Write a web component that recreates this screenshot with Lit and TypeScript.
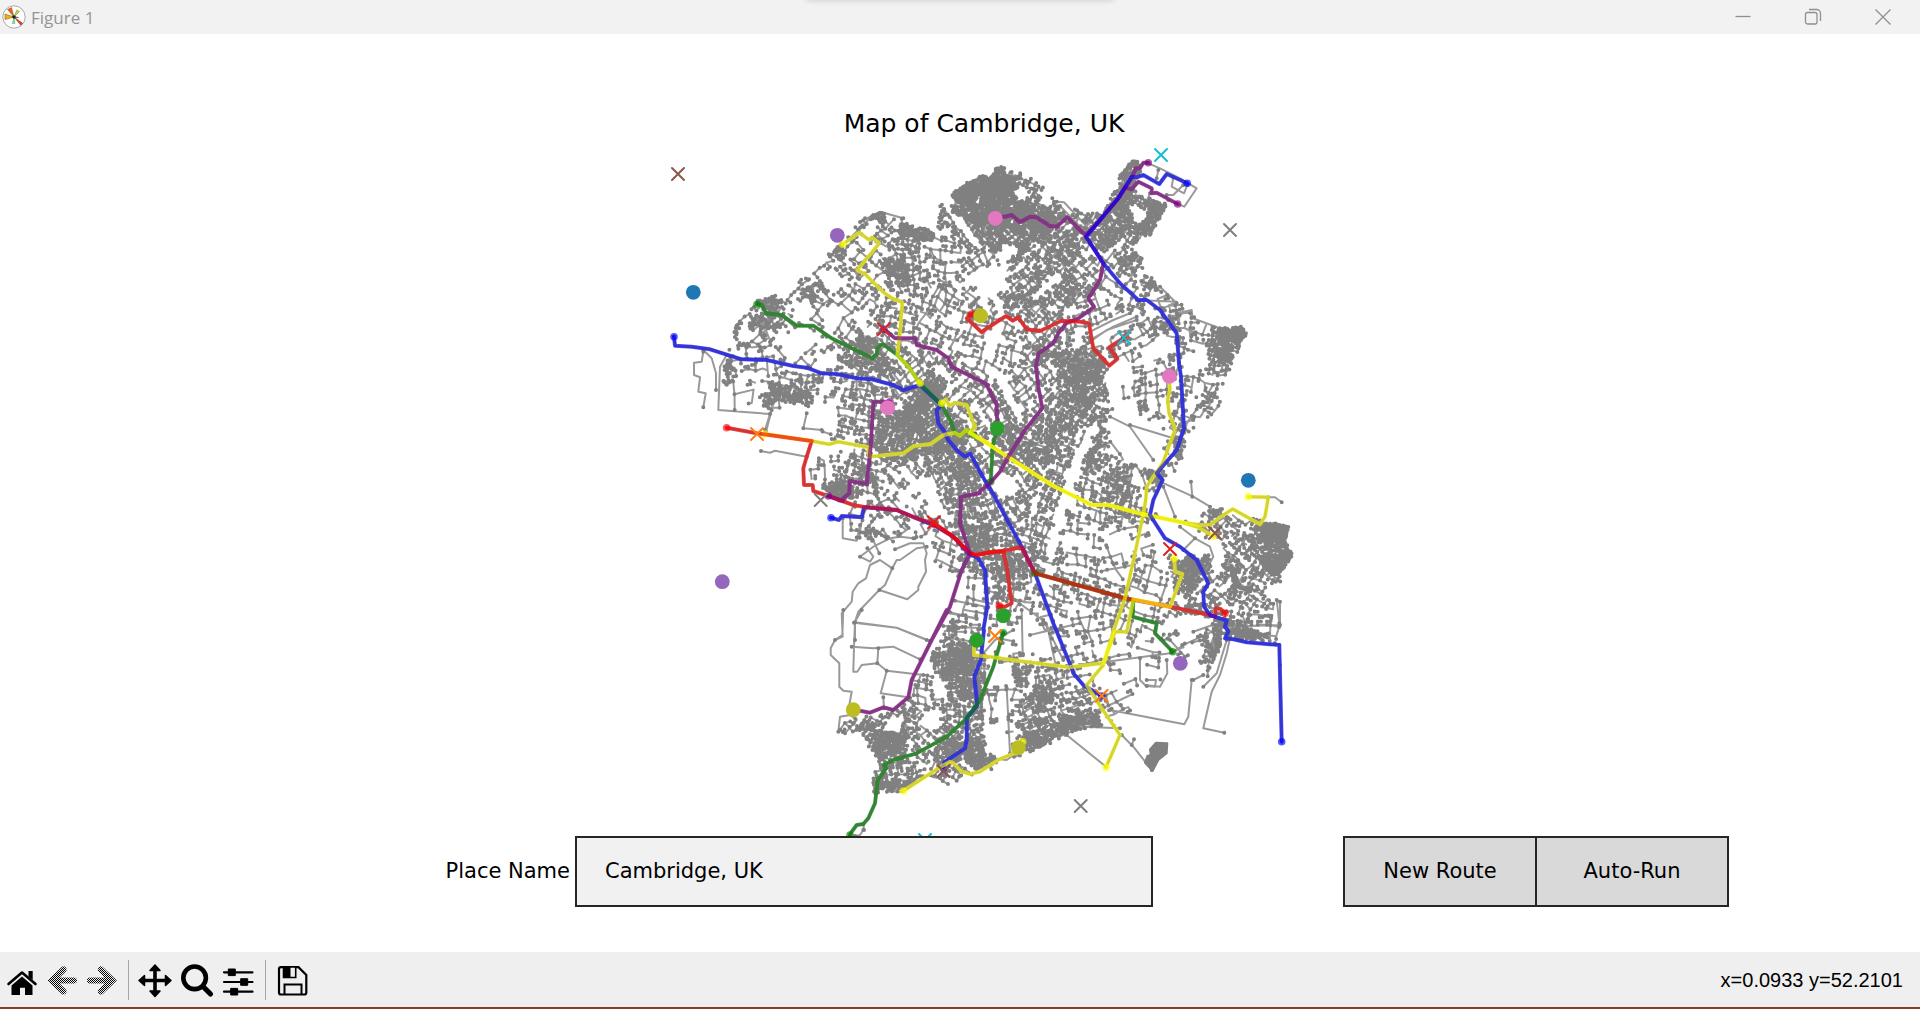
import { LitElement, html, svg, css } from "lit";
import { customElement, state } from "lit/decorators.js";

type Point = [number, number];

/* ---------- survey data ---------- */

// Map sheets. Coordinates inside a sheet are in thirds of a map unit.
const SHEETS: Record<string, Point> = {
  A: [660, 100],
  B: [980, 100],
  C: [660, 410],
  D: [980, 410],
  E: [780, 610],
  F: [1030, 610],
};

function trace(text: string): Point[] {
  let origin: Point = [0, 0];
  const points: Point[] = [];
  for (const token of text.trim().split(/\s+/)) {
    if (SHEETS[token]) {
      origin = SHEETS[token];
    } else {
      const [x, y] = token.split(",").map(Number);
      points.push([origin[0] + x / 3, origin[1] + y / 3]);
    }
  }
  return points;
}

const r1 = (n: number) => Math.round(n * 10) / 10;
const toPath = (points: Point[]) => "M" + points.map(([x, y]) => `${r1(x)} ${r1(y)}`).join("L");

const CITY = trace(`A 220,680 250,645 285,605 330,590 370,570 395,575 420,530 480,480 530,440 600,366 660,335
  730,355 735,370 810,390 830,400 830,345 840,310 890,270 940,235 990,222
  B 60,195 85,212 130,220 180,250 230,310 258,340 285,315 330,335 370,340 390,290 420,250 410,235 455,180 490,190
  480,225 455,262 490,290 565,310 530,370 510,405 475,430 455,440 490,475 510,525 535,560 590,605 635,630 640,660
  710,685 785,680 800,700 775,750 750,800 740,860 715,925 650,985
  D 650,35 620,95 615,130 580,190 540,225 500,300 620,330 690,300 720,285 745,310 800,320 850,330 925,350 915,395
  940,435 920,460 905,500 860,540 880,580 900,650 895,700 735,680 690,780
  F 540,200 490,210 510,150 420,150 400,215 360,225 300,290 335,310 280,320 250,350 190,350 110,375 60,400 0,420
  E 780,420 710,440 660,460 560,500 515,535 470,510 440,490 370,548 280,548 270,510 300,460 285,435 240,380 175,365
  180,320 250,320 360,300 385,260 390,205 450,180 450,130 490,100 495,50
  C 890,600 910,520 800,455 820,400 740,390 660,400 548,388 548,280 480,235 445,210 445,150 520,130 510,80 430,55
  440,10 330,10 168,0 A 175,850 200,780 215,720`);

// Commons, playing fields, the river and the railway corridor.
const OPEN_GROUND = [
  "A 870,345 895,350 972,440 950,448",
  "A 955,285 965,285 960,312 940,310",
  "A 850,300 880,290 890,315 860,325",
  "A 470,510 500,500 530,545 520,560",
  "A 480,640 520,600 560,640 500,680",
  "A 350,700 420,700 470,695 480,720 420,755 350,740",
  "A 480,760 530,755 540,790 500,815 470,800",
  "A 230,690 260,670 280,720 240,735",
  "A 400,620 440,600 460,650 400,660",
  "A 655,345 645,400 610,430 590,420 620,390",
  "A 930,520 985,550 985,620 950,590",
  "A 860,620 890,635 910,690 875,680",
  "A 580,640 620,620 640,660 600,690",
  "A 330,930 430,910 440,985 330,985",
  "A 450,930 520,910 520,975 440,980",
  "A 810,780 860,805 865,840 830,825",
  "B 0,520 50,495 85,555 40,590 0,590",
  "B 60,430 115,440 110,465 70,480",
  "B 150,590 230,515 250,535 170,600",
  "B 95,275 130,255 150,285 120,305",
  "B 180,290 200,265 220,305 205,325",
  "B 435,330 470,310 500,345 480,370",
  "B 330,680 460,635 475,665 350,730",
  "B 380,830 435,780 460,800 420,870 385,880",
  "B 10,700 60,690 50,750 20,770",
  "B 480,760 550,710 580,715 550,780",
  "B 620,765 670,750 685,795 630,820",
  "B 410,910 470,890 490,980 410,980",
  "B 620,890 650,870 640,940 620,945",
  "D 395,20 540,80 560,140 530,190 450,130 400,60",
  "D 340,30 352,40 285,220 235,390 200,530 190,530 215,350 260,190",
  "D 10,195 60,185 105,205 120,235 60,270 30,230",
  "D 520,335 650,355 655,410 610,440 525,430",
  "D 395,375 465,390 445,430 405,420",
  "D 260,375 320,375 320,415 262,410",
  "D 110,590 180,640 220,740 140,730 115,650",
  "D 610,610 680,625 700,645 640,680 560,650",
  "D 525,435 555,435 555,465 525,465",
  "D 695,410 735,425 715,490 690,465",
  "C 710,260 780,195 790,230 750,280",
  "C 785,180 840,260 825,310 805,290",
  "C 460,90 580,90 580,110 500,140",
  "C 640,335 685,315 695,340 640,365",
  "E 315,325 370,325 365,365 320,368",
  "E 430,300 485,295 480,345 450,365 425,345",
  "E 605,355 680,365 680,420 625,425",
  "E 610,180 690,165 710,230 640,225",
  "E 460,220 500,215 500,255 460,255",
  "E 650,255 685,255 685,315 640,315",
  "F 190,175 235,175 235,235 195,235",
  "F 335,195 375,195 355,290 320,270",
  "F 260,155 325,145 325,195 280,215",
  "F 10,105 65,115 55,145 15,145",
].map(trace);

// Neighbourhoods: centre, street bearing, block width and depth, share of streets kept.
const DISTRICTS: number[][] = [
  [755, 320, -40, 8, 9, 0.75],
  [755, 370, -8, 8, 14, 0.7],
  [735, 395, 82, 14, 22, 0.6],
  [790, 395, 5, 6, 9, 0.8],
  [800, 340, -52, 8, 15, 0.6],
  [815, 300, -52, 6, 12, 0.75],
  [835, 270, -40, 7, 12, 0.65],
  [880, 222, -48, 6, 9, 0.75],
  [870, 270, -50, 7, 12, 0.7],
  [918, 232, 8, 5, 6, 0.9],
  [905, 270, 80, 6, 9, 0.8],
  [940, 250, 6, 8, 12, 0.75],
  [860, 320, 38, 7, 13, 0.65],
  [900, 320, 10, 6, 11, 0.75],
  [935, 320, 25, 7, 12, 0.7],
  [955, 215, 48, 6, 7, 0.85],
  [975, 190, -35, 4, 5, 0.95],
  [1000, 200, -40, 4, 5, 0.95],
  [975, 225, 46, 5, 6, 0.9],
  [1015, 235, -45, 5, 6, 0.85],
  [1035, 200, 30, 5, 7, 0.8],
  [1035, 220, -40, 4, 5, 0.9],
  [1060, 240, -48, 6, 9, 0.8],
  [985, 275, -42, 7, 12, 0.65],
  [1020, 280, -42, 5, 9, 0.8],
  [1060, 285, 44, 5, 9, 0.85],
  [1105, 235, -55, 5, 8, 0.85],
  [1125, 200, -56, 4, 5, 0.9],
  [1150, 215, -62, 4, 5, 0.85],
  [1110, 265, 40, 6, 12, 0.75],
  [1140, 285, -65, 6, 14, 0.65],
  [1175, 305, -15, 8, 12, 0.6],
  [1085, 325, -20, 8, 14, 0.65],
  [1040, 330, 45, 6, 10, 0.8],
  [1000, 345, 20, 8, 13, 0.65],
  [1035, 385, 50, 7, 12, 0.7],
  [1080, 375, -48, 4, 7, 0.9],
  [1070, 410, -60, 5, 8, 0.85],
  [1130, 340, -30, 7, 12, 0.7],
  [1145, 385, 80, 8, 13, 0.65],
  [1190, 340, 8, 7, 11, 0.75],
  [1230, 340, 15, 4, 5, 0.9],
  [1200, 380, 10, 7, 11, 0.75],
  [1205, 410, -60, 6, 9, 0.8],
  [1125, 430, 60, 16, 20, 0.6],
  [880, 350, 35, 6, 9, 0.8],
  [905, 375, 50, 6, 10, 0.7],
  [870, 400, 8, 6, 9, 0.8],
  [930, 395, -45, 4, 6, 0.85],
  [850, 425, 6, 7, 9, 0.75],
  [820, 420, 5, 12, 14, 0.6],
  [900, 440, -80, 4, 6, 0.85],
  [940, 430, -40, 4, 5, 0.9],
  [960, 400, -50, 7, 11, 0.7],
  [990, 420, 50, 6, 9, 0.8],
  [1040, 440, -62, 5, 9, 0.8],
  [1085, 450, -68, 5, 10, 0.8],
  [825, 470, 0, 9, 12, 0.6],
  [840, 490, 5, 5, 6, 0.85],
  [865, 475, 15, 7, 9, 0.75],
  [905, 480, 40, 8, 12, 0.6],
  [945, 470, 50, 5, 8, 0.75],
  [885, 520, 45, 8, 10, 0.7],
  [850, 515, 2, 16, 16, 0.6],
  [930, 520, 55, 10, 12, 0.6],
  [965, 500, -12, 5, 7, 0.85],
  [975, 545, 5, 5, 7, 0.85],
  [940, 550, 20, 9, 12, 0.65],
  [1000, 500, 62, 6, 8, 0.75],
  [1025, 480, 45, 5, 9, 0.8],
  [1055, 490, -65, 5, 9, 0.8],
  [1010, 565, 0, 5, 7, 0.8],
  [1040, 550, 20, 6, 9, 0.75],
  [1090, 500, 10, 7, 11, 0.75],
  [1120, 490, -78, 5, 8, 0.8],
  [1085, 545, 5, 9, 13, 0.75],
  [1120, 555, -20, 9, 14, 0.7],
  [1155, 480, 60, 9, 13, 0.6],
  [1060, 590, 12, 7, 11, 0.75],
  [1100, 600, 12, 7, 12, 0.75],
  [1150, 580, 14, 9, 16, 0.65],
  [1190, 570, 35, 4, 5, 0.9],
  [1215, 590, -45, 6, 10, 0.75],
  [1225, 520, 35, 6, 10, 0.75],
  [1250, 550, 40, 6, 10, 0.7],
  [1275, 535, 18, 4, 4, 0.98],
  [1280, 560, 30, 4, 5, 0.9],
  [1250, 595, -60, 6, 10, 0.75],
  [1265, 625, 3, 7, 10, 0.75],
  [1245, 640, 8, 4, 5, 0.9],
  [1210, 615, 10, 6, 9, 0.75],
  [1215, 650, -70, 5, 8, 0.75],
  [1180, 620, 30, 8, 13, 0.65],
  [1190, 655, -30, 9, 12, 0.6],
  [1140, 625, 15, 9, 14, 0.65],
  [1090, 630, -10, 9, 15, 0.7],
  [1050, 640, -20, 9, 15, 0.65],
  [1010, 610, 5, 8, 13, 0.6],
  [975, 600, 5, 10, 13, 0.55],
  [965, 640, 0, 8, 10, 0.65],
  [960, 665, 2, 4, 5, 0.9],
  [1000, 640, 10, 18, 24, 0.5],
  [1020, 670, -5, 6, 10, 0.65],
  [1045, 675, -20, 6, 9, 0.7],
  [1080, 665, -15, 8, 13, 0.7],
  [1120, 670, -15, 12, 16, 0.7],
  [1150, 665, 5, 14, 17, 0.65],
  [1110, 705, -30, 9, 12, 0.65],
  [1070, 700, -20, 6, 9, 0.7],
  [1080, 725, -20, 4, 5, 0.9],
  [1035, 735, -20, 4, 5, 0.9],
  [1040, 705, -25, 5, 8, 0.8],
  [1005, 700, -2, 9, 12, 0.65],
  [965, 700, 2, 5, 7, 0.75],
  [925, 690, 5, 7, 9, 0.7],
  [905, 715, 35, 6, 8, 0.75],
  [865, 720, 30, 6, 8, 0.75],
  [850, 720, -50, 9, 12, 0.6],
  [890, 740, 20, 4, 5, 0.9],
  [925, 740, 35, 6, 10, 0.7],
  [945, 745, 40, 5, 7, 0.8],
  [975, 755, 60, 4, 6, 0.8],
  [960, 775, 30, 6, 9, 0.75],
  [900, 780, -8, 5, 7, 0.75],
  [1010, 745, -20, 10, 16, 0.6],
  [1190, 545, 30, 16, 22, 0.6],
];

// Closely built courts: centre, half width and depth, number of junctions.
const COURTS: number[][] = [
  [880, 214, 8, 5, 30], [909, 230, 9, 6, 60], [927, 233, 8, 6, 50], [770, 303, 10, 7, 50], [765, 322, 14, 8, 50],
  [735, 327, 5, 6, 24], [812, 290, 9, 8, 30], [838, 252, 8, 6, 26], [897, 272, 12, 11, 90], [865, 345, 11, 9, 70],
  [880, 366, 12, 8, 40], [788, 393, 22, 9, 100], [728, 370, 5, 14, 40], [850, 362, 14, 6, 36], [925, 395, 14, 10, 70],
  [905, 420, 18, 10, 60], [940, 445, 14, 14, 90], [960, 470, 14, 12, 60], [900, 455, 16, 8, 50], [975, 190, 16, 13, 200],
  [1000, 188, 16, 14, 200], [985, 215, 18, 16, 190], [1012, 212, 16, 14, 140], [960, 202, 12, 12, 80],
  [1035, 228, 14, 12, 80], [1010, 250, 20, 10, 60], [1058, 245, 18, 12, 80], [1050, 215, 14, 12, 70],
  [1108, 228, 18, 14, 90], [1130, 185, 7, 14, 60], [1120, 206, 8, 9, 40], [1156, 212, 9, 9, 60], [1148, 228, 9, 9, 50],
  [1133, 162, 4, 4, 20], [1055, 285, 20, 14, 80], [1025, 300, 18, 8, 50], [1130, 262, 9, 10, 40], [1154, 285, 5, 8, 26],
  [1232, 334, 13, 8, 110], [1222, 350, 8, 8, 40], [1082, 372, 16, 12, 100], [1078, 400, 12, 12, 70], [1050, 350, 16, 10, 50],
  [1140, 410, 8, 6, 20], [1060, 430, 16, 14, 70], [1085, 460, 12, 14, 60], [1040, 455, 14, 8, 50], [1010, 440, 16, 14, 80],
  [1154, 474, 6, 8, 50], [838, 491, 13, 7, 80], [862, 470, 14, 10, 30], [1064, 505, 6, 14, 50], [1120, 485, 12, 10, 40],
  [980, 540, 12, 12, 60], [1008, 560, 14, 14, 60], [1000, 590, 10, 12, 30], [1190, 568, 10, 10, 100], [1276, 533, 14, 9, 220],
  [1272, 562, 11, 9, 70], [1288, 555, 5, 6, 30], [1220, 508, 6, 6, 30], [1246, 545, 10, 10, 30], [1250, 637, 16, 5, 60],
  [1195, 612, 14, 8, 30], [1222, 628, 7, 7, 30], [1215, 655, 7, 16, 50], [960, 660, 12, 15, 130], [970, 690, 10, 10, 50],
  [890, 742, 12, 12, 110], [865, 725, 12, 6, 30], [905, 728, 10, 8, 30], [950, 748, 12, 10, 60], [975, 755, 10, 10, 60],
  [1080, 722, 18, 7, 90], [1034, 743, 14, 6, 80], [1045, 695, 12, 10, 60], [1020, 675, 8, 8, 30],
  [888, 785, 14, 6, 40], [1165, 325, 14, 8, 26], [870, 530, 9, 9, 26], [1180, 450, 5, 12, 30],
  [950, 628, 9, 10, 30], [1100, 430, 8, 20, 40], [1030, 560, 9, 14, 30], [1240, 585, 12, 10, 30], [1232, 568, 10, 8, 30],
];

// Single lanes outside the built-up area.
const LANES = [
  "A 42,710 45,737 95,740 150,748 200,765",
  "A 130,755 125,785 102,788 102,825 120,832 115,875 137,880 130,922",
  "A 130,750 155,775 168,820 168,870",
  "A 200,765 180,800 175,930 330,942 350,870",
  "A 600,366 660,335 730,355", "A 640,345 600,385 570,415",
  "A 330,942 315,990",
  "C 318,65 335,0", "C 303,123 330,128 345,122 440,140", "C 430,55 485,60", "C 440,10 430,55",
  "C 600,440 640,410 690,385 720,380 760,385", "C 600,440 630,455 640,440 622,415",
  "C 705,418 750,400 790,400 800,430 795,450 798,485 775,530 775,540 742,568 658,540",
  "C 800,410 770,415 720,450 710,450 697,475 675,525 658,540 595,605 585,635 585,690",
  "C 697,475 660,450 630,465 618,505 595,520 578,545 575,575 545,610 548,680 525,690",
  "C 585,637 710,653 800,690", "C 630,370 658,430", "C 548,325 548,385 590,392 600,345",
  "C 885,572 985,592", "C 870,607 950,627", "C 850,648 970,655",
  "E 190,0 187,75 165,90 152,115 152,135 178,160 178,230 190,242 215,245 207,290",
  "E 245,0 225,35 222,110 220,185 232,185 245,165 292,160 295,115",
  "E 222,38 350,53 450,93", "E 215,110 280,115 340,110 420,148", "E 292,160 320,182 430,195",
  "E 320,182 302,250 385,262", "E 310,262 312,295", "E 500,8 590,25", "E 175,365 180,320 210,315 230,330 195,370",
  "E 725,0 728,135", "E 610,130 645,90 700,60", "E 680,235 690,430", "E 600,440 680,450 720,420",
  "E 250,660 240,675 225,678", "E 250,642 252,660",
  "B 500,188 540,205 600,235 650,265 613,320 565,300", "B 560,285 580,285 610,255", "B 580,232 575,260 612,280 622,255",
  "B 535,210 530,235", "B 470,300 495,315 510,280", "B 485,290 480,310",
  "B 230,305 252,307 330,390", "B 240,318 318,398", "B 10,340 10,330",
  "B 470,600 590,605 550,625", "B 540,560 590,610", "B 590,640 635,630 638,655 720,685",
  "B 310,740 380,690 470,660", "B 330,720 400,680 470,650", "B 320,700 400,660 450,640",
  "D 390,20 450,50 520,150", "D 450,45 580,85", "D 540,215 640,260 690,290 700,320", "D 633,215 637,260",
  "D 550,230 585,320", "D 865,262 885,262 905,277", "D 690,290 685,345 740,320",
  "D 600,350 645,385 690,410 700,440 688,463", "D 645,385 610,420",
  "D 640,30 600,40 580,80", "D 890,570 898,640", "D 735,650 900,645", "D 640,665 740,630", "D 105,570 200,640 230,780",
  "D 900,575 900,645",
  "F 0,75 150,40", "F 40,30 100,150", "F 230,155 420,130 470,100 580,50",
  "F 420,90 465,140", "F 485,210 475,320 463,343 240,300", "F 490,210 520,195", "F 605,60 590,130 570,195 545,245 520,355 583,368",
  "F 590,90 560,190 520,230", "F 110,375 228,470", "F 275,375 310,410 365,480", "F 305,405 312,388",
  "F 410,150 412,190 390,230 345,225 330,210 330,145", "F 350,210 378,210 375,230 350,228", "F 748,105 750,165",
  "F 70,345 160,350 270,355",
].map(trace);

// The business park at the southern edge is built up as one solid block.
const PARK = trace("F 378,398 412,400 410,430 385,450 368,482 345,458 352,438 362,435 360,418");

/* ---------- street network ---------- */

function randomSource(seed: number) {
  return () => {
    seed = (seed + 0x6d2b79f5) | 0;
    let t = Math.imul(seed ^ (seed >>> 15), 1 | seed);
    t = (t + Math.imul(t ^ (t >>> 7), 61 | t)) ^ t;
    return ((t ^ (t >>> 14)) >>> 0) / 4294967296;
  };
}

function inside(x: number, y: number, polygon: Point[]) {
  let hit = false;
  for (let i = 0, j = polygon.length - 1; i < polygon.length; j = i++) {
    const [xi, yi] = polygon[i];
    const [xj, yj] = polygon[j];
    if (yi > y !== yj > y && x < ((xj - xi) * (y - yi)) / (yj - yi) + xi) hit = !hit;
  }
  return hit;
}

function nearestDistrict(x: number, y: number) {
  let best = 0;
  let bestDistance = Infinity;
  DISTRICTS.forEach(([dx, dy], i) => {
    const d = (dx - x) ** 2 + (dy - y) ** 2;
    if (d < bestDistance) {
      bestDistance = d;
      best = i;
    }
  });
  return best;
}

function buildNetwork() {
  const rnd = randomSource(52);
  const streets: string[] = [];
  const junctions: string[] = [];
  const street = (a: Point, b: Point) =>
    streets.push(`M${r1(a[0])} ${r1(a[1])}L${r1(b[0])} ${r1(b[1])}`);
  const junction = (p: Point) => junctions.push(`M${r1(p[0])} ${r1(p[1])}h0`);
  const buildable = (x: number, y: number) =>
    inside(x, y, CITY) && !OPEN_GROUND.some((ground) => inside(x, y, ground));

  DISTRICTS.forEach(([cx, cy, bearing, width, depth, keep], index) => {
    const cos = Math.cos((bearing * Math.PI) / 180);
    const sin = Math.sin((bearing * Math.PI) / 180);
    const w = width * 0.88;
    const d = depth * 0.84;
    const reach = 60;
    const nodes = new Map<string, Point>();
    const cols = Math.ceil(reach / w);
    const rows = Math.ceil(reach / d);
    for (let i = -cols; i <= cols; i++) {
      for (let j = -rows; j <= rows; j++) {
        const u = i * w + (rnd() - 0.5) * w * 0.7;
        const v = j * d + (rnd() - 0.5) * d * 0.25 + Math.sin(i * 0.7) * 1.5;
        const x = cx + u * cos - v * sin;
        const y = cy + u * sin + v * cos;
        if (nearestDistrict(x, y) === index && buildable(x, y)) nodes.set(`${i},${j}`, [x, y]);
      }
    }
    nodes.forEach((p, key) => {
      const [i, j] = key.split(",").map(Number);
      const along = nodes.get(`${i + 1},${j}`);
      const across = nodes.get(`${i},${j + 1}`);
      if (along && rnd() < keep + 0.12) street(p, along);
      if (across && rnd() < keep * 0.5) street(p, across);
      if (rnd() < 0.85) junction(p);
      if (rnd() < 0.7) {
        const side = rnd() < 0.5 ? -1 : 1;
        const length = 2 + rnd() * Math.min(5, d * 0.45);
        const end: Point = [p[0] - sin * length * side, p[1] + cos * length * side];
        if (buildable(end[0], end[1])) {
          street(p, end);
          junction(end);
          if (rnd() < 0.5) {
            const turn = rnd() < 0.5 ? -3 : 3;
            const spur: Point = [end[0] + cos * turn, end[1] + sin * turn];
            street(end, spur);
            junction(spur);
          }
        }
      }
    });
  });

  for (const [cx, cy, rx, ry, count] of COURTS) {
    const bearing = (DISTRICTS[nearestDistrict(cx, cy)][2] * Math.PI) / 180;
    const turn = rx === ry || Math.abs(rx - ry) < 5 ? bearing : 0;
    let last: Point | null = null;
    for (let n = 0; n < count; n++) {
      const u = (rnd() + rnd() * 0.3 - 0.65) * 2 * rx;
      const v = (rnd() + rnd() * 0.3 - 0.65) * 2 * ry;
      const p: Point = [cx + u * Math.cos(turn) - v * Math.sin(turn), cy + u * Math.sin(turn) + v * Math.cos(turn)];
      if (!buildable(p[0], p[1])) continue;
      junction(p);
      if (last && Math.hypot(p[0] - last[0], p[1] - last[1]) < 9) street(p, last);
      last = p;
    }
  }

  for (const lane of LANES) {
    streets.push(toPath(lane));
    junction(lane[0]);
    junction(lane[lane.length - 1]);
  }

  return { streets: streets.join(""), junctions: junctions.join("") };
}

/* ---------- routes and markers ---------- */

const BLUE = "#0000ff";
const GREEN = "#008000";
const YELLOW = "#ffff00";
const RED = "#ff0000";
const PURPLE = "#800080";

const ROUTES: { color: string; line: Point[] }[] = [
  [BLUE, "A 42,710 45,737 95,740 150,748 245,778 320,780 400,798 440,803 485,820 530,822 590,835 635,838 700,855 730,870 780,855 845,915 830,930 835,970 C 835,40 850,60 865,90 895,125 915,140 930,130 985,230 D 25,225 125,410 165,490 220,640 275,775 F 130,190 160,225 215,258"],
  [GREEN, "D 52,55 38,108 32,215"],
  [GREEN, "A 291,613 305,615 318,640 365,645 410,677 460,677 515,715 637,775 650,762 652,745 668,732 712,765 745,800 780,850 845,915 870,960 885,1000 C 885,65 900,78 918,60 940,75"],
  [YELLOW, "A 548,433 598,398 628,420 635,412 658,430 592,510 615,522 670,577 700,597 727,607 720,700 712,765 745,800 780,850"],
  [YELLOW, "A 845,910 858,898 868,917 885,908 920,915 930,940 945,985 C 945,45 930,70 990,105 D 0,85 85,142 215,225 335,285 385,285 490,313 605,337 650,350 700,378"],
  [YELLOW, "C 315,72 455,93 507,103 535,95 625,112 628,140 730,130 762,108 812,102 850,75 885,68 900,78 918,60 990,105 D 0,85 85,142 215,225 335,285 385,285 490,313 605,337 660,345 690,345 730,315 758,297 840,343 855,320 865,262 805,260"],
  [BLUE, "C 513,323 537,330 545,318 605,322 612,292 710,300 770,325 830,350 880,380 925,430 955,445 975,480 982,590 970,660 E 612,60 602,150 583,200 590,265 592,285 560,325 560,390 555,415 492,457 490,475"],
  [GREEN, "D 165,490 435,565 460,570 458,620 530,640 525,670 578,725"],
  [RED, "C 200,53 290,70 455,93 440,140 430,175 432,225 458,225 460,243 505,258 580,285 610,290 710,300 770,325 805,335 830,345 880,380 930,430 950,435 990,427 D 70,422 125,412 165,490 435,565 570,590 690,615 705,620 707,595 722,597 735,610"],
  [RED, "C 822,342 880,380 930,430 950,435 990,427 D 70,425 80,470 95,580 75,590 58,587"],
  [PURPLE, "A 690,905 640,905 C 632,110 620,222 570,213 568,250 550,265 548,273 505,258"],
  [GREEN, "E 670,68 640,170 600,270 560,325 500,380 410,430 340,450 312,465 318,475 293,510 285,580 265,625 250,642 230,645 215,665 210,675"],
  [YELLOW, "B 568,840 570,870 563,900 567,940 585,985 D 583,65 548,160 500,230 497,270 490,313 465,430 435,565 400,665 370,765 F 170,225 205,280 270,375 228,472"],
  [YELLOW, "D 583,445 585,485 607,492 570,590 460,568 440,665 405,665 370,760 F 115,172 0,157 E 640,142 582,135 582,90"],
  [YELLOW, "E 370,543 475,475 510,455 520,460 545,485 570,492 600,485 660,447 715,425 728,395"],
  [PURPLE, "A 672,688 705,715 765,715 770,735 830,750 865,775 875,800 985,855 B 20,855 50,915 52,980"],
  [PURPLE, "B 505,188 490,188 480,205 468,205 455,232 415,295 345,378 318,410 370,490 360,540 325,595 342,620 330,630 295,655 260,668 235,700 220,730 175,760 168,800 175,860 187,925 135,990 D 85,140 60,185 25,225 0,243 C 960,250 903,260 900,340 930,430 905,480 870,590 815,690 E 500,0 470,60 395,210 385,262 340,300 310,292 270,308 240,302 220,297"],
  [PURPLE, "B 46,350 75,350 95,345 120,367 150,350 170,352 210,378 230,380 262,352 315,405 345,378 415,295 435,262 455,268 475,245 515,265 515,280 530,278 593,312"],
  [BLUE, "B 622,250 560,222 538,252 490,225 470,232 455,230 415,295 345,378 318,410 370,490 420,550 475,600 500,600 540,630 590,700 597,790 603,830 612,985 D 610,60 590,120 530,190 548,210 520,270 510,315 555,385 600,410 650,450 685,520 670,545 672,590 690,615 740,632 735,650 745,665 735,685 760,688 F 650,97 748,105 755,395"],
  [RED, "B 435,712 388,742 412,777 388,797 340,745 327,670 300,665 245,662 180,693 140,688 115,652 98,662 78,648 10,692 A 965,697 920,655 935,642"],
].map(([color, line]) => ({ color, line: trace(line) }));

const ROUTE_BED = ROUTES.map(({ line }) => toPath(line)).join("");

const place = (at: string) => trace(at)[0];

const DOTS = [
  ["#9467bd", "A 532,406"], ["#1f77b4", "A 100,577"], ["#bcbd22", "A 962,647"], ["#e377c2", "B 46,355"],
  ["#e377c2", "A 683,923"], ["#e377c2", "B 568,829"], ["#2ca02c", "D 52,55"], ["#1f77b4", "D 805,211"],
  ["#9467bd", "C 187,515"], ["#2ca02c", "D 70,617"], ["#2ca02c", "E 590,91"], ["#9467bd", "D 601,760"],
  ["#bcbd22", "E 220,299"], ["#bcbd22", "E 715,413"],
].map(([color, at]) => ({ color, at: place(at) }));

const CROSSES = [
  ["#8c564b", "A 54,222"], ["#17becf", "B 543,165"], ["#7f7f7f", "B 750,390"], ["#d62728", "A 671,688"],
  ["#17becf", "B 432,713"], ["#ff7f0e", "C 291,72"], ["#7f7f7f", "C 482,270"], ["#e02020", "C 822,337"],
  ["#8c564b", "D 705,369"], ["#e02020", "D 570,417"], ["#ff7f0e", "D 45,678"], ["#ff7f0e", "F 215,257"],
  ["#8c564b", "E 490,483"], ["#7f7f7f", "F 152,588"], ["#17becf", "E 435,690"],
].map(([color, at]) => ({ color, at: place(at) }));

@customElement("route-map")
export class RouteMap extends LitElement {
  static styles = css`
    :host {
      display: block;
      min-height: 0;
    }
    .map {
      display: block;
      width: 100%;
      height: 100%;
    }
    .streets,
    .junctions,
    .bed,
    .route,
    .cross {
      fill: none;
      stroke-linecap: round;
      stroke-linejoin: round;
    }
    .streets {
      stroke: #999999;
      stroke-width: 2;
    }
    .junctions {
      stroke: #808080;
      stroke-width: 4;
    }
    .park {
      fill: #808080;
      stroke: #808080;
      stroke-width: 2;
      stroke-linejoin: round;
    }
    .bed {
      stroke: #8c8c8c;
      stroke-width: 3;
    }
    .route {
      stroke-width: 4;
      opacity: 0.62;
    }
    .stop {
      opacity: 0.65;
    }
    .cross {
      stroke-width: 2;
    }
  `;

  private network = buildNetwork();

  render() {
    return html`
      <svg class="map" viewBox="664 145 640 691" role="img" aria-label="Street map with routes">
        <path class="streets" d=${this.network.streets}></path>
        <path class="junctions" d=${this.network.junctions}></path>
        <path class="park" d=${toPath(PARK) + "Z"}></path>
        <path class="bed" d=${ROUTE_BED}></path>
        ${ROUTES.map(
          ({ color, line }) => svg`
            <path class="route" stroke=${color} d=${toPath(line)}></path>
            ${[line[0], line[line.length - 1]].map(
              ([x, y]) => svg`<circle class="stop" fill=${color} cx=${r1(x)} cy=${r1(y)} r="3.8"></circle>`,
            )}`,
        )}
        ${DOTS.map(({ color, at: [x, y] }) => svg`<circle fill=${color} cx=${r1(x)} cy=${r1(y)} r="7.4"></circle>`)}
        ${CROSSES.map(
          ({ color, at: [x, y] }) => svg`
            <path class="cross" stroke=${color}
              d=${`M${r1(x - 6)} ${r1(y - 6)}l12 12m0 -12l-12 12`}></path>`,
        )}
      </svg>
    `;
  }
}

/* ---------- icons ---------- */

const appIcon = svg`
  <circle cx="12" cy="12" r="11.2" fill="#fdfdfd" stroke="#a9a9a9" stroke-width="1"></circle>
  <path d="M12 12 3 14.500 3 9z" fill="#f0b010" stroke="#8a6a20" stroke-width=".6"></path>
  <path d="M12 12 5.500 4.500 9.500 2.600z" fill="#e0641c" stroke="#9a4a1a" stroke-width=".5"></path>
  <path d="M12 12 14.800 5 17.500 6.500z" fill="#b6d84c" stroke="#6f8a2a" stroke-width=".5"></path>
  <path d="M12 12 10.300 18.500 13 18.500z" fill="#7fd8a0" stroke="#4a9a6a" stroke-width=".4"></path>
  <path d="M12 12 18.800 20.300 20.600 18.300z" fill="#d8481c" stroke="#8a3010" stroke-width=".5"></path>
  <path d="M12 12 16.500 12.500" stroke="#555" stroke-width="1"></path>
  <circle cx="12" cy="12" r="1.800" fill="#222"></circle>`;

const checker = (id: string) => svg`
  <defs>
    <pattern id=${id} width="2" height="2" patternUnits="userSpaceOnUse">
      <path d="M0 0h1v1H0zM1 1h1v1H1z" fill="#000" shape-rendering="crispEdges"></path>
    </pattern>
  </defs>`;

const homeIcon = svg`
  <path d="M6.500 24 20 12.500 33.500 24" fill="none" stroke="#000" stroke-width="2.600" stroke-linecap="round" stroke-linejoin="round"></path>
  <path d="M26.500 11h4.200v9l-4.200-3.500z"></path>
  <path d="M9.500 25.500 20 16.500l10.500 9V35H23v-7.300h-5V35H9.500z"></path>`;
const backIcon = svg`${checker("back-tone")}
  <path d="M21.500 9.500 10 20.500l11.500 11M10.500 20.500H32" fill="none" stroke="url(#back-tone)" stroke-width="6" stroke-linecap="round"></path>`;
const forwardIcon = svg`${checker("forward-tone")}
  <path d="M19 9.500 30.500 20.500 19 31.500M29.500 20.500H8" fill="none" stroke="url(#forward-tone)" stroke-width="6" stroke-linecap="round"></path>`;
const panIcon = svg`
  <path d="M20 8v25M8 20.500h24" stroke="#000" stroke-width="3.600"></path>
  <path d="M20 5l5 5.500H15zM20 36.500l5-5.500H15zM4 20.500l5.500-5v10zM36 20.500l-5.500-5v10z" stroke="#000" stroke-width="1.500" stroke-linejoin="round"></path>`;
const zoomIcon = svg`
  <circle cx="17.600" cy="17.800" r="11.300" fill="none" stroke="#000" stroke-width="4.600"></circle>
  <path d="M26 26.500 33.500 34" stroke="#000" stroke-width="5.200" stroke-linecap="round"></path>`;
const slidersIcon = svg`
  <path d="M5 12.300h28.500M5 22h28.500M5 31.700h28.500" stroke="#000" stroke-width="2.200" stroke-linecap="round"></path>
  <path d="M9.300 9h7v6.600h-7zM21.700 18.700h7v6.600h-7zM11.700 28.400h7V35h-7z" stroke="#000" stroke-width="1" stroke-linejoin="round"></path>`;
const saveIcon = svg`
  <path d="M9 7.200h17.500l7.800 7.800v17.500a2 2 0 0 1-2 2H9a2 2 0 0 1-2-2V9.200a2 2 0 0 1 2-2z" fill="none" stroke="#000" stroke-width="2.200"></path>
  <path d="M11.500 7h12.200v10.500H11.500z" fill="#efefef" stroke="#000" stroke-width="1.600"></path>
  <path d="M11.500 7h7v10.500h-7z"></path>
  <path d="M12.500 34.500V24.500h17v10" fill="none" stroke="#000" stroke-width="2"></path>`;

const NAVIGATION = [
  [
    { name: "Home", icon: homeIcon },
    { name: "Back", icon: backIcon },
    { name: "Forward", icon: forwardIcon },
  ],
  [
    { name: "Pan", icon: panIcon },
    { name: "Zoom", icon: zoomIcon },
    { name: "Configure subplots", icon: slidersIcon },
  ],
  [{ name: "Save", icon: saveIcon }],
];

const WINDOW_BUTTONS = [
  { name: "Minimize", icon: svg`<path d="M2.500 8.500h15"></path>` },
  {
    name: "Restore",
    icon: svg`<rect x="2.500" y="4.500" width="11.500" height="11.500" rx="2"></rect><path d="M6 1.500h7.500a4 4 0 0 1 4 4V13"></path>`,
  },
  { name: "Close", icon: svg`<path d="M2.500 1.500l15 15M17.500 1.500l-15 15"></path>` },
];

@customElement("app-root")
export class AppRoot extends LitElement {
  static styles = css`
    :host {
      display: flex;
      flex-direction: column;
      height: 100vh;
      box-sizing: border-box;
      background: #ffffff;
      color: #000000;
      font-family: "DejaVu Sans", sans-serif;
      border-bottom: 2px solid #863d29;
    }
    button,
    input {
      font: inherit;
      color: inherit;
      margin: 0;
      border-radius: 0;
      box-sizing: border-box;
    }
    .titlebar {
      position: relative;
      display: flex;
      align-items: center;
      gap: 5px;
      height: 34px;
      padding: 0 2px;
      background: #f2f2f2;
      color: #959595;
      font-family: "Open Sans", "Noto Sans", sans-serif;
      font-size: 17px;
    }
    .titlebar::before {
      content: "";
      position: absolute;
      top: -4px;
      left: 42%;
      width: 16%;
      height: 4px;
      box-shadow: 0 0 6px rgba(0, 0, 0, 0.2);
    }
    .app-icon {
      width: 24px;
      height: 24px;
    }
    .window-buttons {
      display: flex;
      margin-left: auto;
    }
    .window-button {
      display: grid;
      place-items: center;
      width: 70px;
      height: 34px;
      padding: 0;
      border: 0;
      background: transparent;
    }
    .window-button svg {
      width: 20px;
      height: 18px;
      fill: none;
      stroke: #8f8f8f;
      stroke-width: 1.3;
    }
    .figure {
      display: flex;
      flex-direction: column;
      flex: 1;
      min-height: 0;
      padding: 70px 0 45px;
    }
    .plot {
      display: flex;
      flex-direction: column;
      flex: 1;
      min-height: 0;
      margin: 0 10% 0 12.5%;
    }
    .plot-title {
      margin: 0;
      height: 41px;
      font-size: 25px;
      line-height: 40px;
      font-weight: 400;
      text-align: center;
    }
    .plot-map {
      flex: 1;
    }
    .controls {
      display: grid;
      grid-template-columns: 30% 30% 10% 10% 10%;
      height: 71px;
      font-size: 21px;
    }
    .place-label {
      align-self: center;
      justify-self: end;
      padding: 0 6px 2px 0;
      line-height: 24px;
    }
    .place-input,
    .action {
      width: calc(100% + 2px);
      height: 100%;
      margin: 0 -1px;
      border: 2px solid #262626;
    }
    .place-input {
      padding: 0 28px 2px;
      background: #f1f1f1;
    }
    .action {
      padding: 0 0 2px;
      background: #d9d9d9;
    }
    .action.first {
      grid-column: 4;
    }
    .toolbar {
      display: flex;
      align-items: center;
      height: 55px;
      padding: 0 17px 0 2px;
      background: #efefef;
    }
    .tools {
      display: flex;
      gap: 2px;
    }
    .tools:first-child {
      gap: 0;
    }
    .tools + .tools {
      margin-left: 6px;
      padding-left: 6px;
      border-left: 1px solid #a6a6a6;
    }
    .tool {
      display: grid;
      place-items: center;
      width: 40px;
      height: 40px;
      padding: 0;
      border: 0;
      background: transparent;
    }
    .tool svg {
      width: 40px;
      height: 40px;
    }
    .coordinates {
      margin-left: auto;
      font-family: "Liberation Sans", Arial, sans-serif;
      font-size: 20px;
      line-height: 24px;
    }
  `;

  @state() private placeName = "Cambridge, UK";

  render() {
    return html`
      <header class="titlebar">
        <svg class="app-icon" viewBox="0 0 24 24" aria-hidden="true">${appIcon}</svg>
        <span>Figure 1</span>
        <div class="window-buttons">
          ${WINDOW_BUTTONS.map(
            ({ name, icon }) => html`
              <button class="window-button" type="button" aria-label=${name}>
                <svg viewBox="0 0 20 18" aria-hidden="true">${icon}</svg>
              </button>
            `,
          )}
        </div>
      </header>
      <main class="figure">
        <section class="plot">
          <h1 class="plot-title">Map of ${this.placeName}</h1>
          <route-map class="plot-map"></route-map>
        </section>
        <form class="controls" @submit=${(event: Event) => event.preventDefault()}>
          <label class="place-label" for="place">Place Name</label>
          <input
            class="place-input"
            id="place"
            type="text"
            .value=${this.placeName}
            @change=${(event: Event) => (this.placeName = (event.target as HTMLInputElement).value)}
          />
          <button class="action first" type="button">New Route</button>
          <button class="action" type="button">Auto-Run</button>
        </form>
      </main>
      <footer class="toolbar">
        ${NAVIGATION.map(
          (group) => html`
            <div class="tools">
              ${group.map(
                ({ name, icon }) => html`
                  <button class="tool" type="button" aria-label=${name}>
                    <svg viewBox="0 0 40 40" aria-hidden="true">${icon}</svg>
                  </button>
                `,
              )}
            </div>
          `,
        )}
        <output class="coordinates">x=0.0933 y=52.2101</output>
      </footer>
    `;
  }
}
